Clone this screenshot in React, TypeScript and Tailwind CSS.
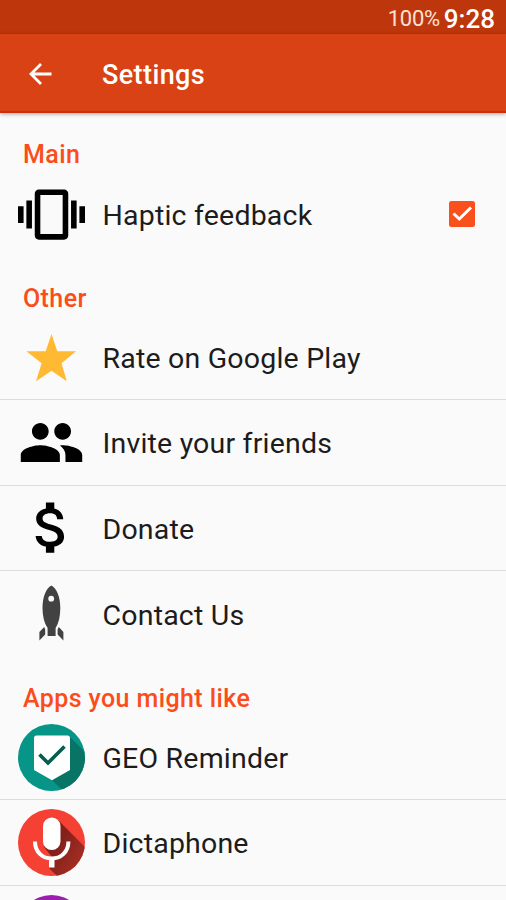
import type { ReactNode } from "react";

const Glyph = ({ d }: { d: string }) => (
  <svg viewBox="0 0 24 24" className="size-[67px]" fill="#000">
    <path d={d} />
  </svg>
);

const VIBRATE =
  "M0 15h2V9H0v6zm3 2h2V7H3v10zm19-8v6h2V9h-2zm-3 8h2V7h-2v10zM16.5 3h-9C6.67 3 6 3.67 6 4.5v15c0 .83.67 1.5 1.5 1.5h9c.83 0 1.5-.67 1.5-1.5v-15c0-.83-.67-1.5-1.5-1.5zM16 19H8V5h8v14z";
const GROUP =
  "M16 11c1.66 0 2.99-1.34 2.99-3S17.66 5 16 5c-1.66 0-3 1.34-3 3s1.34 3 3 3zm-8 0c1.66 0 2.99-1.34 2.99-3S9.66 5 8 5C6.34 5 5 6.34 5 8s1.34 3 3 3zm0 2c-2.33 0-7 1.17-7 3.5V19h14v-2.5c0-2.33-4.67-3.5-7-3.5zm8 0c-.29 0-.62.02-.97.05 1.16.84 1.97 1.97 1.97 3.45V19h6v-2.5c0-2.33-4.67-3.5-7-3.5z";
const DOLLAR =
  "M11.8 10.9c-2.27-.59-3-1.2-3-2.15 0-1.09 1.01-1.85 2.7-1.85 1.78 0 2.44.85 2.5 2.1h2.21c-.07-1.72-1.12-3.3-3.21-3.81V3h-3v2.16c-1.94.42-3.5 1.68-3.5 3.61 0 2.31 1.91 3.46 4.7 4.13 2.5.6 3 1.48 3 2.41 0 .69-.49 1.79-2.7 1.79-2.06 0-2.87-.92-2.98-2.1h-2.2c.12 2.19 1.76 3.42 3.68 3.83V21h3v-2.15c1.95-.37 3.5-1.5 3.5-3.55 0-2.84-2.43-3.81-4.7-4.4z";

const Star = () => (
  <svg viewBox="0 0 67 67" className="size-[67px]">
    <path fill="#ffb932" d="M33.5 10 L39.3 27.3 L58 27.3 L43.5 39.3 L48.8 57.3 L33.5 46.7 L18 57.3 L23.6 39.3 L8.5 27.3 L27.7 27.3Z" />
  </svg>
);

const Rocket = () => (
  <svg viewBox="0 0 67 67" className="size-[67px]" fill="#424242">
    <path
      fillRule="evenodd"
      d="M33.3 5.6C38.5 8 42.3 17 42.3 28C42.3 36 40.8 43 37.6 48V56H29.6V48C26.2 43 24.5 36 24.5 28C24.5 17 28.3 8 33.3 5.6ZM33.2 15.8A2.9 2.9 0 1 0 33.2 21.6A2.9 2.9 0 1 0 33.2 15.8Z"
    />
    <path d="M26.2 47L21.4 52V60.6L27.2 54.6V49.5ZM40.8 47L45.4 52V60.6L39.6 54.6V49.5Z" />
  </svg>
);

const GeoReminder = () => (
  <svg viewBox="0 0 67 67" className="size-[67px]">
    <defs>
      <clipPath id="geo-disc">
        <circle cx="33.5" cy="33.5" r="33.5" />
      </clipPath>
    </defs>
    <g clipPath="url(#geo-disc)">
      <path fill="#069587" d="M0 0H67V67H0Z" />
      <path fill="#087466" d="M51 12L73 34V72H50L34 56Z" />
      <path fill="#fff" d="M18.5 11.5H49.5Q52 11.5 52 14V46L34 56.2L16 46V14Q16 11.5 18.5 11.5Z" />
    </g>
    <path fill="none" stroke="#075e4d" strokeWidth="3.6" d="M21.5 30.5L30 39L46.5 22.5" />
  </svg>
);

const Dictaphone = () => (
  <svg viewBox="0 0 67 67" className="size-[67px]">
    <defs>
      <clipPath id="mic-disc">
        <circle cx="33.5" cy="33.5" r="33.5" />
      </clipPath>
      <linearGradient id="mic-shade" x1="0.25" y1="0.35" x2="0.7" y2="0.7">
        <stop offset="0" stopColor="#822019" />
        <stop offset="1" stopColor="#a82e26" />
      </linearGradient>
    </defs>
    <g clipPath="url(#mic-disc)">
      <path fill="#f54034" d="M0 0H67V67H0Z" />
      <path fill="url(#mic-shade)" d="M40 11L78 49V80H52L31 59L34 48L26 38Z" />
    </g>
    <rect x="25" y="8.5" width="17.5" height="32.5" rx="8.75" fill="#fff" />
    <path fill="none" stroke="#fff" strokeWidth="4" d="M17 32.5C17 43.5 25 49.5 33.7 49.5C42.4 49.5 50.4 43.5 50.4 32.5" />
    <path fill="#fff" d="M31 49H36.5V58.5H31Z" />
  </svg>
);

const PurpleApp = () => (
  <svg viewBox="0 0 67 67" className="size-[67px]">
    <circle cx="33.5" cy="33.5" r="33.5" fill="#9c1fb0" />
  </svg>
);

const Row = ({ icon, label, divider, children }: { icon: ReactNode; label: string; divider?: boolean; children?: ReactNode }) => (
  <div
    className={`flex h-[85.36px] shrink-0 items-center pl-[18px] pr-[31px] ${
      divider ? "border-b-[1.5px] border-[#dcdcdc]" : ""
    }`}
  >
    <div className="mr-[17.5px] shrink-0">{icon}</div>
    <span className="mt-[4px] flex-1 whitespace-nowrap text-[28.5px] leading-none tracking-[0.2px] text-[#1c1c1c]">{label}</span>
    {children}
  </div>
);

const SectionTitle = ({ children }: { children: ReactNode }) => (
  <h2 className="flex h-[58.35px] shrink-0 items-end pb-[2px] pl-[23px] text-[25px] font-medium leading-[28px] tracking-[0.4px] text-[#fa4d1a]">
    {children}
  </h2>
);

export default function App() {
  return (
    <div className="flex h-[900px] w-[506px] flex-col overflow-hidden bg-[#fafafa] font-['Roboto',sans-serif]">
      <div className="flex h-[34px] shrink-0 items-center justify-end gap-[4px] bg-[#be360c] pr-[11px] pt-[4px] leading-none">
        <span className="text-[22px] tracking-[-0.3px] text-[#ffe0d6]">100%</span>
        <span className="text-[26px] font-medium text-white">9:28</span>
      </div>
      <header className="flex h-[79px] shrink-0 items-center border-b-2 border-[#ca2f0c] bg-[#d94215] pl-[28px] shadow-[0_1px_4px_rgba(0,0,0,0.35)]">
        <svg viewBox="0 0 24 24" className="mr-[50px] mt-[2px] h-[24px] w-[24px]" fill="none" stroke="#fff" strokeWidth="2.8">
          <path d="M23.5 12H3M13 2L3 12L13 22" />
        </svg>
        <h1 className="mt-[6px] text-[27px] font-medium leading-none tracking-[0.4px] text-white">Settings</h1>
      </header>
      <main className="flex flex-1 flex-col overflow-hidden">
        <SectionTitle>Main</SectionTitle>
        <Row icon={<Glyph d={VIBRATE} />} label="Haptic feedback">
          <svg viewBox="0 0 26 26" className="mb-px size-[26px]">
            <rect width="26" height="26" rx="2.5" fill="#f9501c" />
            <path d="M4.5 12.5L10.3 18L22 6.5" fill="none" stroke="#fff" strokeWidth="3" />
          </svg>
        </Row>
        <SectionTitle>Other</SectionTitle>
        <Row icon={<Star />} label="Rate on Google Play" divider />
        <Row icon={<Glyph d={GROUP} />} label="Invite your friends" divider />
        <Row icon={<Glyph d={DOLLAR} />} label="Donate" divider />
        <Row icon={<Rocket />} label="Contact Us" />
        <SectionTitle>Apps you might like</SectionTitle>
        <Row icon={<GeoReminder />} label="GEO Reminder" divider />
        <Row icon={<Dictaphone />} label="Dictaphone" divider />
        <Row icon={<PurpleApp />} label="" />
      </main>
    </div>
  );
}
